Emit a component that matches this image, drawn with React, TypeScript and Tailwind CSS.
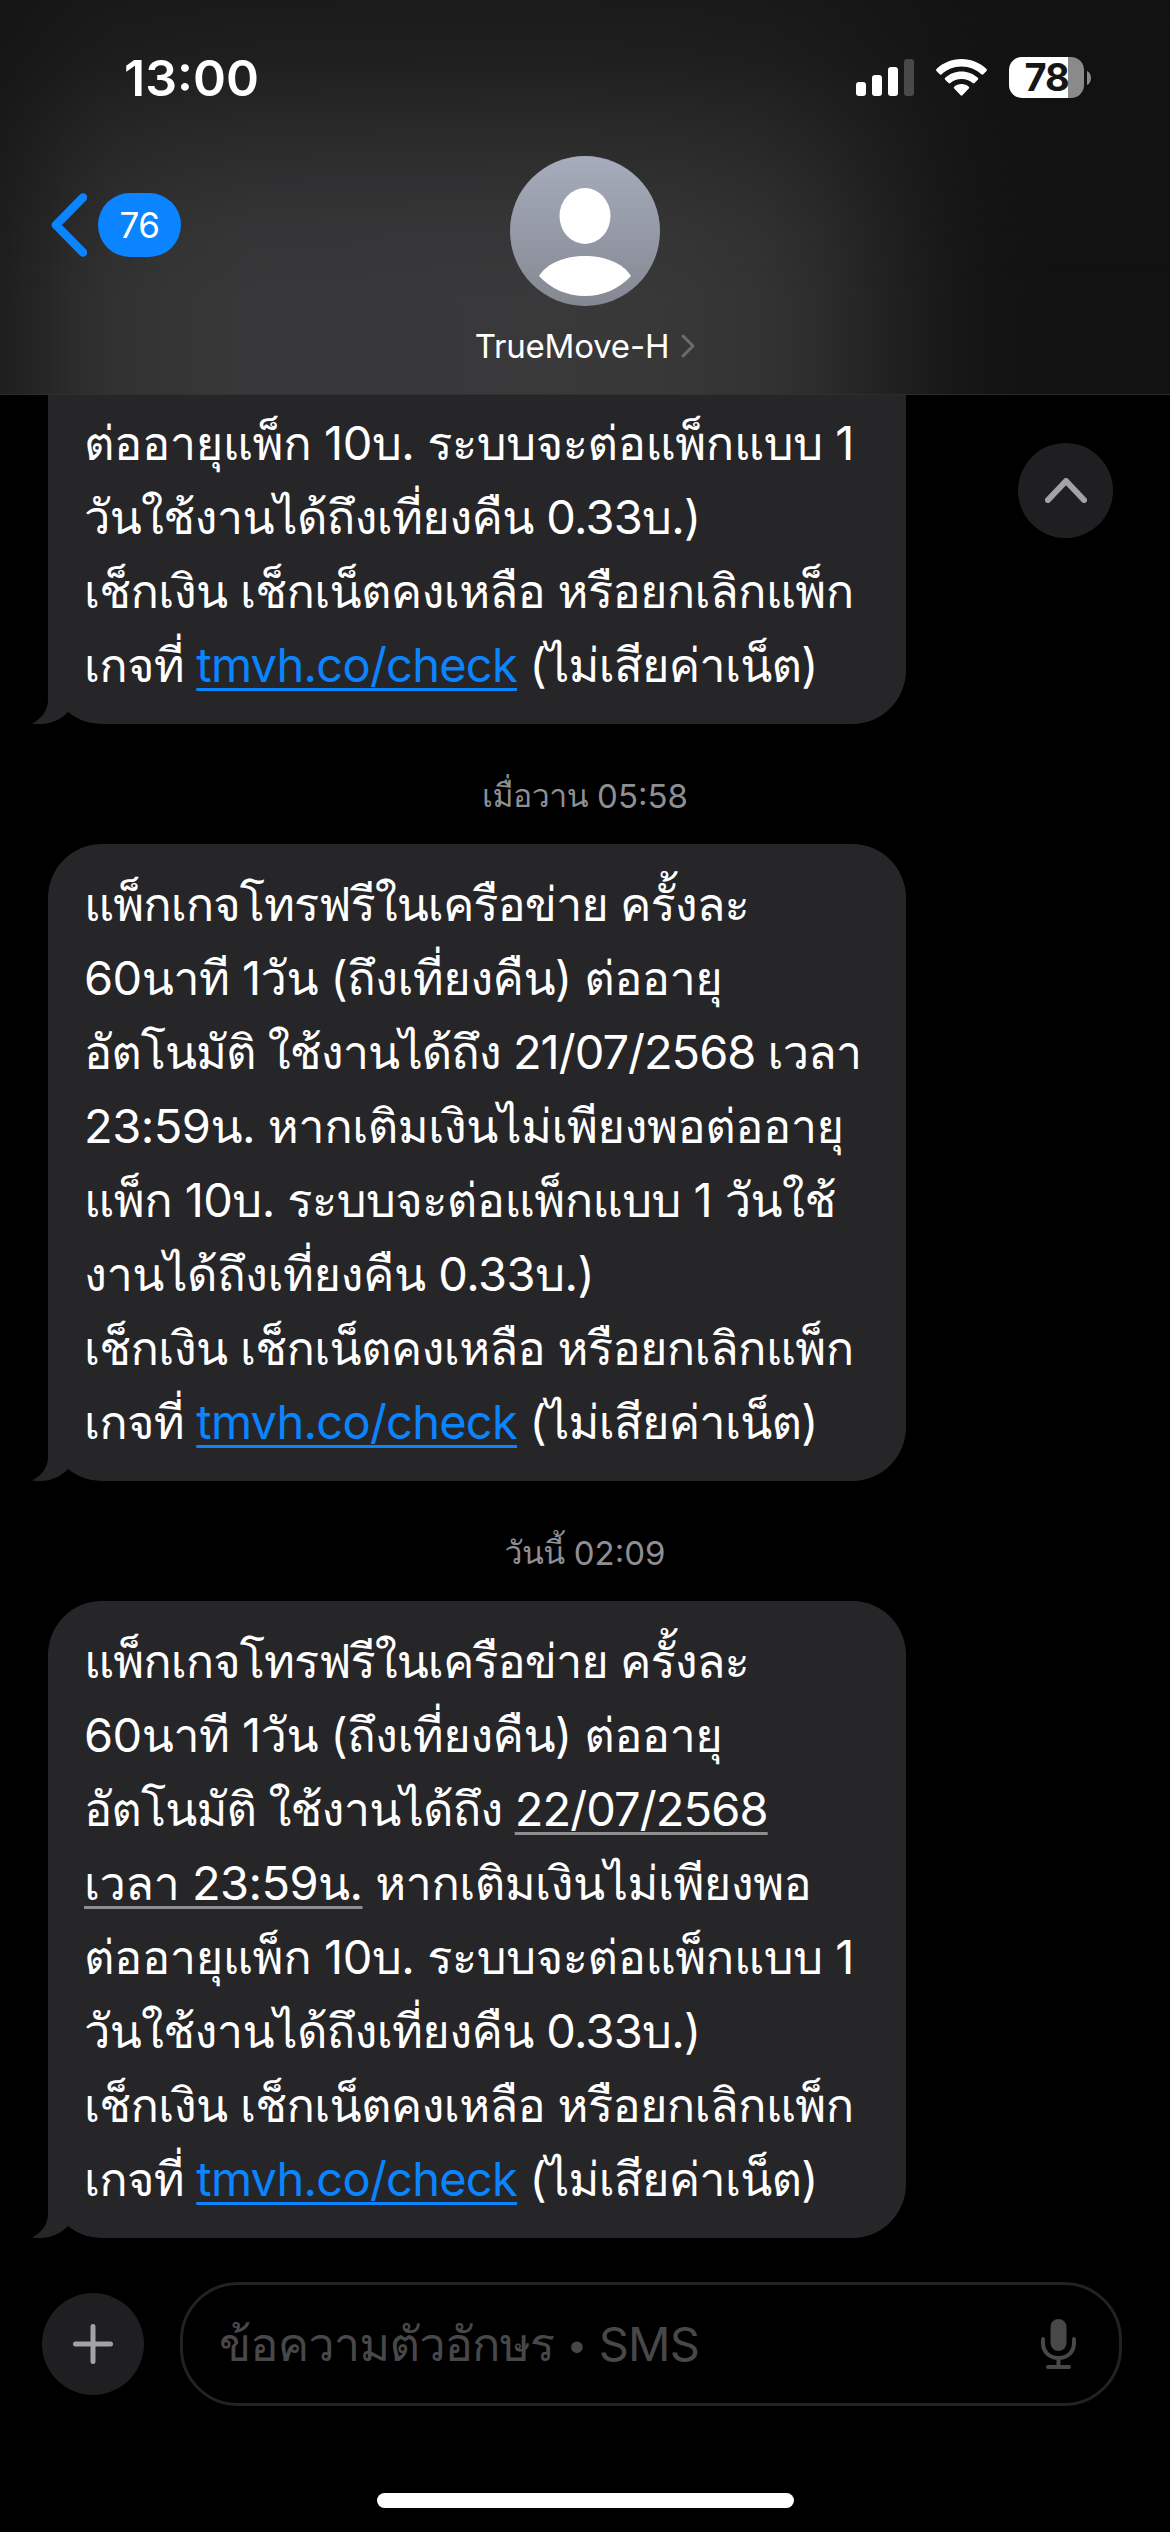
import React from 'react';

interface Line {
  content: React.ReactNode;
  tracking?: string;
}

interface Message {
  id: number;
  day?: string;
  time?: string;
  lines: Line[];
}

const CheckLink = () => (
  <a
    href="#check"
    className="tracking-[-0.75px] text-[#0a84ff] underline decoration-[3px] underline-offset-[6px]"
  >
    tmvh.co/check
  </a>
);

const DetectedDate = ({ children }: { children: React.ReactNode }) => (
  <span className="underline decoration-[#8e8e90] decoration-[3px] underline-offset-[6px]">{children}</span>
);

const opening: Line[] = [
  { content: 'แพ็กเกจโทรฟรีในเครือข่าย ครั้งละ', tracking: 'tracking-[-1px]' },
  { content: '60นาที 1วัน (ถึงเที่ยงคืน) ต่ออายุ', tracking: 'tracking-[-0.58px]' },
];

const renewal: Line[] = [
  { content: 'ต่ออายุแพ็ก 10บ. ระบบจะต่อแพ็กแบบ 1', tracking: 'tracking-[-0.43px]' },
  { content: 'วันใช้งานได้ถึงเที่ยงคืน 0.33บ.)', tracking: 'tracking-[-0.7px]' },
];

const closing: Line[] = [
  { content: 'เช็กเงิน เช็กเน็ตคงเหลือ หรือยกเลิกแพ็ก', tracking: 'tracking-[-0.7px]' },
  { content: <>เกจที่ <CheckLink /> (ไม่เสียค่าเน็ต)</>, tracking: 'tracking-[-0.8px]' },
];

const messages: Message[] = [
  {
    id: 1,
    lines: [...renewal, ...closing],
  },
  {
    id: 2,
    day: 'เมื่อวาน',
    time: '05:58',
    lines: [
      ...opening,
      { content: 'อัตโนมัติ ใช้งานได้ถึง 21/07/2568 เวลา', tracking: 'tracking-[-1px]' },
      { content: '23:59น. หากเติมเงินไม่เพียงพอต่ออายุ', tracking: 'tracking-[-0.5px]' },
      { content: 'แพ็ก 10บ. ระบบจะต่อแพ็กแบบ 1 วันใช้', tracking: 'tracking-[-0.56px]' },
      { content: 'งานได้ถึงเที่ยงคืน 0.33บ.)', tracking: 'tracking-[-0.5px]' },
      ...closing,
    ],
  },
  {
    id: 3,
    day: 'วันนี้',
    time: '02:09',
    lines: [
      ...opening,
      {
        content: <>อัตโนมัติ ใช้งานได้ถึง <DetectedDate>22/07/2568</DetectedDate></>,
        tracking: 'tracking-[-0.9px]',
      },
      {
        content: <><DetectedDate>เวลา 23:59น.</DetectedDate> หากเติมเงินไม่เพียงพอ</>,
        tracking: 'tracking-[-0.58px]',
      },
      ...renewal,
      ...closing,
    ],
  },
];

const StatusBar = () => (
  <div className="flex h-[156px] items-start justify-between pl-[124px] pr-[79px] pt-[57px]">
    <span className="text-[50px] font-semibold leading-[42px]">13:00</span>
    <div className="flex h-[41px] items-center">
      <svg width="58" height="37" viewBox="0 0 58 37" fill="white">
        <rect x="0" y="23" width="10" height="14" rx="3" />
        <rect x="16" y="16" width="10" height="21" rx="3" />
        <rect x="32" y="8" width="10" height="29" rx="3" />
        <rect x="48" y="0" width="10" height="37" rx="3" fillOpacity="0.22" />
      </svg>
      <svg className="ml-[22px]" width="51" height="37" viewBox="0 0 51 37" fill="white">
        <path d="M25.5 0C35.3 0 44.2 3.8 50.5 10.1c.6.6.6 1.3 0 1.9l-3.2 3.3c-.6.6-1.4.6-2 0C40.2 10.4 33.2 7.5 25.5 7.5S10.8 10.4 5.7 15.3c-.6.6-1.4.6-2 0L.5 12c-.6-.6-.6-1.3 0-1.9C6.8 3.8 15.7 0 25.5 0z" />
        <path d="M25.5 12.5c6.3 0 12 2.4 16.3 6.3.6.6.6 1.3 0 1.9l-3.3 3.3c-.6.6-1.3.6-1.9.1-3-2.6-6.8-4.1-11.1-4.1s-8.1 1.5-11.1 4.1c-.6.5-1.3.5-1.9-.1L9.2 20.7c-.6-.6-.6-1.3 0-1.9 4.3-3.9 10-6.3 16.3-6.3z" />
        <path d="M25.5 25c2.8 0 5.3 1 7.3 2.7.6.5.6 1.2 0 1.8l-6.4 6.8c-.5.6-1.3.6-1.8 0l-6.4-6.8c-.6-.6-.6-1.3 0-1.8 2-1.7 4.5-2.7 7.3-2.7z" />
      </svg>
      <div className="ml-[22px] flex h-[41px] w-[75px] items-center justify-center rounded-[13px] bg-[linear-gradient(to_right,#fff_59px,#8a8a8a_59px)]">
        <span className="text-[38px] font-bold leading-[41px] tracking-[-1.2px] text-[#161616]">78</span>
      </div>
      <svg className="ml-[3px]" width="4" height="14" viewBox="0 0 4 14" fill="#8a8a8a">
        <path d="M0 0c2.5 1 4 3.8 4 7s-1.5 6-4 7z" />
      </svg>
    </div>
  </div>
);

const Header = () => (
  <header className="h-[395px] shrink-0 border-b border-white/10 bg-[linear-gradient(to_bottom,#121212c8_0px,#121212a8_60px,#1212126c_120px,#12121238_180px,#12121214_230px,#12121200_300px),linear-gradient(to_right,#1e1e1e_0px,#242424_35px,#2b2b2b_70px,#313131_110px,#353536_170px,#38383a_260px,#39393a_560px,#373738_680px,#333334_760px,#2c2c2d_820px,#222222_880px,#191919_940px,#141414_990px,#121212_1050px)]">
    <StatusBar />
    <div className="grid grid-cols-[1fr_auto_1fr] items-start px-[51px]">
      <div className="mt-[37px] flex items-center gap-[11px]">
        <svg width="36" height="64" viewBox="0 0 36 64" fill="none">
          <path d="M32 4.500 5 32l27 27.500" stroke="#0a84ff" strokeWidth="8.500" strokeLinecap="round" strokeLinejoin="round" />
        </svg>
        <span className="flex h-16 w-[83px] items-center justify-center rounded-[32px] bg-[#0a84ff] text-[35px] tracking-[-0.5px]">
          76
        </span>
      </div>
      <div className="flex flex-col items-center">
        <svg width="150" height="150" viewBox="0 0 150 150">
          <defs>
            <linearGradient id="avatar" x1="0" y1="0" x2="0" y2="1">
              <stop offset="0" stopColor="#a6acbb" />
              <stop offset="1" stopColor="#848892" />
            </linearGradient>
          </defs>
          <circle cx="75" cy="75" r="75" fill="url(#avatar)" />
          <ellipse cx="75" cy="60" rx="25.500" ry="28" fill="white" />
          <path d="M29 120C37 107 55 100 75 100s38 7 46 20C109 133 93 140 75 140s-34-7-46-20z" fill="white" />
        </svg>
        <div className="mt-[20px] flex items-center gap-[12px]">
          <span className="text-[33px] leading-[40px] tracking-[-0.2px]">TrueMove-H</span>
          <svg width="14" height="24" viewBox="0 0 14 24" fill="none">
            <path d="m2 2 10 10L2 22" stroke="#6c6c6e" strokeWidth="3" strokeLinecap="round" strokeLinejoin="round" />
          </svg>
        </div>
      </div>
    </div>
  </header>
);

const Bubble = ({ lines, cut }: { lines: Line[]; cut: boolean }) => (
  <div
    className={`relative w-[858px] bg-[#262628] pl-[36px] pb-[22px] ${cut ? 'rounded-b-[54px] pt-[11px]' : 'rounded-[54px] pt-[23px]'}`}
  >
    {lines.map((line, i) => (
      <p key={i} className={`h-[74px] whitespace-nowrap text-[47px] leading-[74px] ${line.tracking ?? ''}`}>
        {line.content}
      </p>
    ))}
    <svg className="absolute -left-4 bottom-0" width="70" height="60" viewBox="0 0 70 60">
      <path d="M10 60c12-1 20-5 26-12 8 8 18 12 34 12z" fill="black" />
      <path d="M16 0v36C16 47 9 55 0 59.500 14 62 28 57 36 48L28 0z" fill="#262628" />
    </svg>
  </div>
);

const Composer = () => (
  <footer className="mt-[44px] flex items-center gap-9 pl-[42px]">
    <button className="flex size-[102px] items-center justify-center rounded-full bg-[#1f1f21]">
      <svg width="40" height="40" viewBox="0 0 40 40">
        <path d="M20 2.500v35M2.500 20h35" stroke="#a3a3a5" strokeWidth="5" strokeLinecap="round" />
      </svg>
    </button>
    <div className="flex h-[124px] w-[942px] items-center justify-between rounded-[58px] border-[3px] border-[#222223] pl-[36px] pr-[43px]">
      <span className="mt-[2px] whitespace-nowrap text-[47px] leading-[74px] tracking-[-0.85px] text-[#48484a]">
        ข้อความตัวอักษร <span className="mx-[3px] font-['Liberation_Sans'] text-[42px]">•</span> SMS
      </span>
      <svg width="35" height="50" viewBox="0 0 35 50" fill="none" stroke="#48484a">
        <rect x="9.500" y="0" width="16" height="32" rx="8" fill="#48484a" stroke="none" />
        <path d="M2 20v4c0 9 6.500 15 15.500 15S33 33 33 24v-4M17.500 39v8" strokeWidth="4" strokeLinecap="round" />
        <path d="M7 48h21" strokeWidth="4" strokeLinecap="round" />
      </svg>
    </div>
  </footer>
);

export default function App() {
  return (
    <div className="relative flex h-[2532px] w-[1170px] flex-col overflow-hidden bg-black font-[Inter,Loma,'Noto_Sans',sans-serif] text-white">
      <Header />
      <main className="flex flex-col pl-12">
        {messages.map((message) => (
          <React.Fragment key={message.id}>
            {message.day && (
              <div className="flex h-[120px] items-center justify-center gap-[9px] pr-12 pt-[24px] text-[33px] leading-[50px] text-[#8e8e93]">
                <span className="text-[32px] font-medium tracking-[-0.5px]">{message.day}</span>
                <span>{message.time}</span>
              </div>
            )}
            <Bubble lines={message.lines} cut={!message.day} />
          </React.Fragment>
        ))}
      </main>
      <button className="absolute right-[57px] top-[443px] flex size-[95px] items-center justify-center rounded-full bg-[#1f1f21]">
        <svg width="42" height="25" viewBox="0 0 42 25" fill="none">
          <path d="M3 22 21 3l18 19" stroke="#a3a3a5" strokeWidth="6" strokeLinecap="round" strokeLinejoin="round" />
        </svg>
      </button>
      <Composer />
      <div className="mt-[87px] ml-[377px] h-[15px] w-[417px] rounded-full bg-white" />
    </div>
  );
}
